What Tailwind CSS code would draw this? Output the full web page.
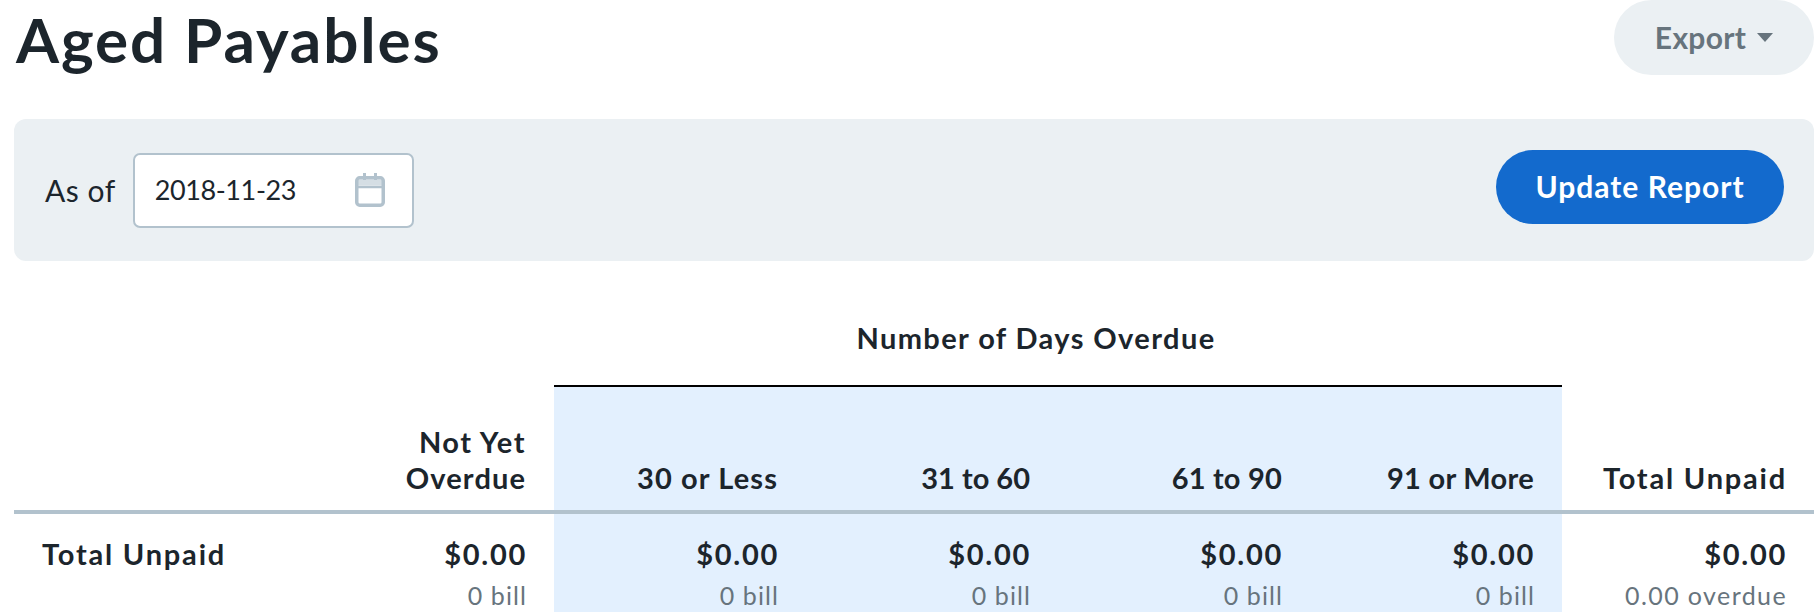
<!DOCTYPE html>
<html><head><meta charset="utf-8"><script src="https://cdn.jsdelivr.net/npm/@tailwindcss/browser@4"></script></head>
<body class="bg-white">
<div class="h-[612px] w-[1819px] overflow-hidden pl-[14px] pr-[5px] font-['Lato',sans-serif] text-[#1c252c]">
  <div class="flex h-[119px] items-start justify-between">
    <h1 class="mt-[6px] ml-[2px] text-[62px] leading-[66px] font-bold tracking-[1.9px]">Aged Payables</h1>
    <button class="flex h-[75px] w-[200px] items-center justify-center gap-[11px] rounded-full bg-[#ebf0f3] text-[30px] font-bold tracking-[0.3px] text-[#67747d]">Export<svg width="16" height="9" viewBox="0 0 16 9"><path d="M0 0h16L8 9z" fill="#67747d"/></svg></button>
  </div>
  <div class="flex h-[142px] items-center justify-between rounded-[12px] bg-[#ebf0f3] pr-[30px] pl-[31px]">
    <div class="flex items-center gap-[17px]">
      <span class="text-[30px] tracking-[0.5px]">As of</span>
      <div class="flex h-[75px] w-[281px] items-center justify-between rounded-[7px] border-2 border-[#b2c2cd] bg-white pr-[27px] pl-[20px] text-[27px] tracking-[-0.4px]">2018-11-23
        <svg width="30" height="34" viewBox="0 0 30 34" fill="none" stroke="#b2c2cd" stroke-width="3.500"><rect x="1.750" y="4.750" width="26.500" height="27.500" rx="3"/><path d="M2 9.500h26" stroke-width="6" stroke-opacity="0.55"/><path d="M2 14h26" stroke-width="2.500"/><path d="M9.500 0v7M20.500 0v7" stroke-width="3"/></svg>
      </div>
    </div>
    <button class="mb-[7px] h-[74px] w-[288px] rounded-full bg-[#136acd] text-[30px] font-bold tracking-[1px] text-white">Update Report</button>
  </div>
  <div class="grid grid-cols-[288px_repeat(6,252px)] text-right">
    <div class="col-span-7 grid grid-cols-subgrid">
      <div class="col-span-2"></div>
      <div class="col-span-4 flex h-[126px] items-end justify-center border-b-2 border-black pr-[44px] pb-[26px] text-[29px] font-bold tracking-[1.4px]">Number of Days Overdue</div>
    </div>
    <div class="col-span-7 grid grid-cols-subgrid border-b-4 border-[#b2c2cd] text-[29px] leading-[36px] font-bold">
      <div></div>
      <div class="h-[123px] pt-[37px] pr-[28px]"><div class="tracking-[1.500px]">Not Yet</div><div class="tracking-[1.100px]">Overdue</div></div>
      <div class="flex items-end justify-end bg-[#e3f0fe] pr-[28px] pb-[14px] tracking-[1.100px]">30 or Less</div>
      <div class="flex items-end justify-end bg-[#e3f0fe] pr-[28px] pb-[14px]">31 to 60</div>
      <div class="flex items-end justify-end bg-[#e3f0fe] pr-[28px] pb-[14px] tracking-[0.2px]">61 to 90</div>
      <div class="flex items-end justify-end bg-[#e3f0fe] pr-[28px] pb-[14px] tracking-[0.3px]">91 or More</div>
      <div class="flex items-end justify-end pr-[27px] pb-[14px] tracking-[1.800px]">Total Unpaid</div>
    </div>
    <div class="col-span-7 grid grid-cols-subgrid">
      <div class="pt-[22px] pl-[28px] text-left text-[29px] leading-[36px] font-bold tracking-[1.8px]">Total Unpaid</div>
      <div class="h-[100px] pt-[22px] pr-[27px]"><div class="text-[29px] leading-[36px] font-bold tracking-[1.7px]">$0.00</div><div class="mt-[5px] text-[25px] tracking-[1.1px] text-[#67747d]">0 bill</div></div>
      <div class="bg-[#e3f0fe] pt-[22px] pr-[27px]"><div class="text-[29px] leading-[36px] font-bold tracking-[1.7px]">$0.00</div><div class="mt-[5px] text-[25px] tracking-[1.1px] text-[#67747d]">0 bill</div></div>
      <div class="bg-[#e3f0fe] pt-[22px] pr-[27px]"><div class="text-[29px] leading-[36px] font-bold tracking-[1.7px]">$0.00</div><div class="mt-[5px] text-[25px] tracking-[1.1px] text-[#67747d]">0 bill</div></div>
      <div class="bg-[#e3f0fe] pt-[22px] pr-[27px]"><div class="text-[29px] leading-[36px] font-bold tracking-[1.7px]">$0.00</div><div class="mt-[5px] text-[25px] tracking-[1.1px] text-[#67747d]">0 bill</div></div>
      <div class="bg-[#e3f0fe] pt-[22px] pr-[27px]"><div class="text-[29px] leading-[36px] font-bold tracking-[1.7px]">$0.00</div><div class="mt-[5px] text-[25px] tracking-[1.1px] text-[#67747d]">0 bill</div></div>
      <div class="pt-[22px] pr-[27px]"><div class="text-[29px] leading-[36px] font-bold tracking-[1.7px]">$0.00</div><div class="mt-[5px] text-[25px] tracking-[1.400px] text-[#67747d]">0.00 overdue</div></div>
    </div>
  </div>
</div>
</body></html>
